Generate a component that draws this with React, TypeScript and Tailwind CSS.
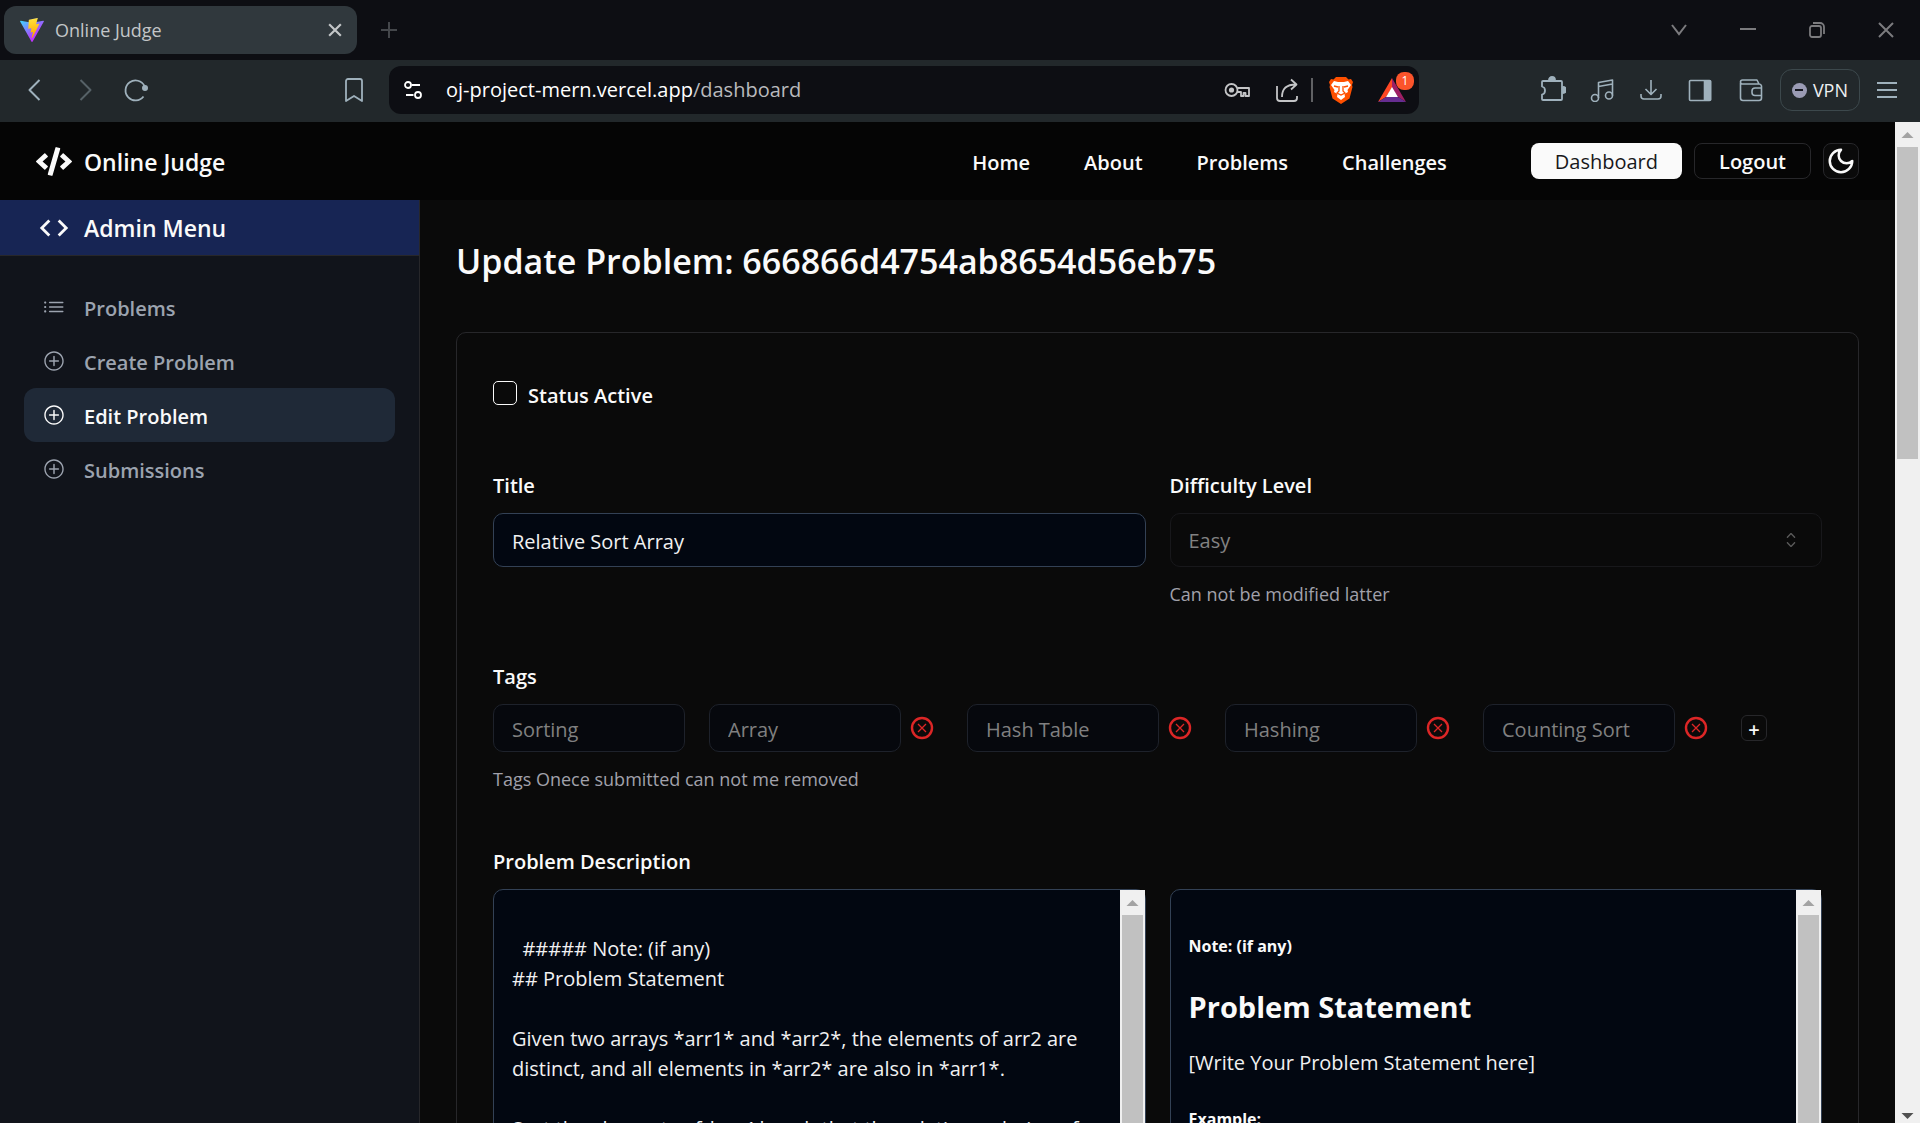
import { useState } from 'react';
import type { ReactNode } from 'react';
import { FaCode } from 'react-icons/fa';
import { MdCode } from 'react-icons/md';
import { RxCaretSort, RxListBullet, RxPlusCircled } from 'react-icons/rx';

function ViteLogo() {
  return (
    <svg viewBox="0 0 256 257" className="size-6" aria-hidden="true">
      <defs>
        <linearGradient id="vite-a" x1="-.828%" x2="57.636%" y1="7.652%" y2="78.411%">
          <stop offset="0%" stopColor="#41D1FF" />
          <stop offset="100%" stopColor="#BD34FE" />
        </linearGradient>
        <linearGradient id="vite-b" x1="43.376%" x2="50.316%" y1="2.242%" y2="89.03%">
          <stop offset="0%" stopColor="#FFEA83" />
          <stop offset="8.333%" stopColor="#FFDD35" />
          <stop offset="100%" stopColor="#FFA800" />
        </linearGradient>
      </defs>
      <path fill="url(#vite-a)" d="M255.153 37.938 134.897 252.976c-2.483 4.44-8.862 4.466-11.382.048L.875 37.958c-2.746-4.814 1.371-10.646 6.827-9.67l120.385 21.517a6.537 6.537 0 0 0 2.322-.004l117.867-21.483c5.438-.991 9.574 4.796 6.877 9.62Z" />
      <path fill="url(#vite-b)" d="M185.432.063 96.44 17.501a3.268 3.268 0 0 0-2.634 3.014l-5.474 92.456a3.268 3.268 0 0 0 3.997 3.378l24.777-5.718c2.318-.535 4.413 1.507 3.936 3.838l-7.361 36.047c-.495 2.426 1.782 4.5 4.151 3.78l15.304-4.649c2.372-.72 4.652 1.36 4.15 3.788l-11.698 56.621c-.732 3.542 3.979 5.473 5.943 2.437l1.313-2.028 72.516-144.72c1.215-2.423-.88-5.186-3.54-4.672l-25.505 4.922c-2.396.462-4.435-1.77-3.759-4.114l16.646-57.705c.677-2.35-1.37-4.583-3.769-4.113Z" />
    </svg>
  );
}

function Icon({ children, className = '' }: { children: ReactNode; className?: string }) {
  return (
    <svg viewBox="0 0 24 24" fill="none" stroke="currentColor" strokeWidth="1.6" strokeLinejoin="round" className={className} aria-hidden="true">
      {children}
    </svg>
  );
}

function IconButton({ label, children, className = '' }: { label: string; children: ReactNode; className?: string }) {
  return (
    <button type="button" aria-label={label} className={`flex shrink-0 items-center justify-center ${className}`}>
      {children}
    </button>
  );
}

function TabStrip() {
  return (
    <div className="flex h-15 shrink-0 items-center bg-[#0d0e13] text-[#7b7b7e]">
      <div className="ml-1 flex h-12 w-[353px] items-center rounded-xl bg-[#30383d] pl-4 pr-3 text-[#c3c6c8]">
        <ViteLogo />
        <span className="ml-[11px] flex-1 text-[18px]">Online Judge</span>
        <IconButton label="Close tab" className="size-5">
          <Icon className="size-5"><path strokeWidth="2.6" d="M5 5l14 14M19 5 5 19" /></Icon>
        </IconButton>
      </div>
      <IconButton label="New tab" className="ml-6 size-4 text-[#44474b]">
        <svg viewBox="0 0 16 16" className="size-4" stroke="currentColor" strokeWidth="2" aria-hidden="true"><path d="M8 0v16M0 8h16" /></svg>
      </IconButton>
      <div className="ml-auto flex items-center">
        <IconButton label="Search tabs" className="size-[69px]">
          <svg viewBox="0 0 16 16" className="size-4" fill="none" stroke="currentColor" strokeWidth="2" aria-hidden="true"><path d="m1 3 7 9 7-9" /></svg>
        </IconButton>
        <IconButton label="Minimize" className="size-[69px]">
          <svg viewBox="0 0 16 16" className="size-4" stroke="currentColor" strokeWidth="2" aria-hidden="true"><path d="M0 7h16" /></svg>
        </IconButton>
        <IconButton label="Restore" className="size-[69px]">
          <svg viewBox="0 0 16 16" className="size-4" fill="none" stroke="currentColor" strokeWidth="1.8" aria-hidden="true">
            <rect x="1" y="4" width="11" height="11" rx="2" />
            <path d="M4 1h7a4 4 0 0 1 4 4v7" />
          </svg>
        </IconButton>
        <IconButton label="Close" className="size-[69px]">
          <svg viewBox="0 0 16 16" className="size-4" stroke="currentColor" strokeWidth="2" aria-hidden="true"><path d="m1 1 14 14M15 1 1 15" /></svg>
        </IconButton>
      </div>
    </div>
  );
}

function Toolbar() {
  return (
    <div className="flex h-[62px] shrink-0 items-center bg-[#22282b] pb-[2px] text-[#9fb1bc]">
      <IconButton label="Back" className="ml-[22px] size-6">
        <Icon className="size-6"><path strokeWidth="2" d="M17.500 2 7.500 12l10 10" /></Icon>
      </IconButton>
      <IconButton label="Forward" className="ml-[27px] size-6 text-[#566167]">
        <Icon className="size-6"><path strokeWidth="2" d="m7.500 2 10 10-10 10" /></Icon>
      </IconButton>
      <IconButton label="Reload" className="ml-[27px] size-6">
        <Icon className="size-6"><path strokeWidth="1.800" d="M19.500 18.500A10 10 0 1 1 20.500 8" /><circle cx="21" cy="10" r="2.200" fill="currentColor" /></Icon>
      </IconButton>
      <IconButton label="Bookmark" className="ml-[194px] size-6">
        <Icon className="size-6"><path strokeWidth="1.800" d="M4 3a2 2 0 0 1 2-2h12a2 2 0 0 1 2 2v20l-8-5-8 5Z" /></Icon>
      </IconButton>

      <div className="ml-[23px] flex h-12 min-w-0 flex-1 items-center rounded-xl bg-[#0d0e13] text-[#c4c5c7]">
        <IconButton label="Site settings" className="ml-[14px] size-5 text-white">
          <svg viewBox="0 0 20 20" className="size-5" fill="none" stroke="currentColor" strokeWidth="1.800" aria-hidden="true">
            <circle cx="5" cy="5" r="3" /><path d="M8.500 5H17M3 15h7.500" /><circle cx="15" cy="15" r="3" />
          </svg>
        </IconButton>
        <p className="ml-[23px] flex-1 truncate text-[20px] text-[#b9babd]">
          <span className="text-white">oj-project-mern.vercel.app</span>/dashboard
        </p>
        <IconButton label="Passwords" className="size-[26px]">
          <svg viewBox="0 0 26 26" className="size-[26px]" fill="none" stroke="currentColor" strokeWidth="1.800" strokeLinejoin="round" aria-hidden="true">
            <circle cx="7.500" cy="13" r="6" /><circle cx="7.500" cy="13" r="2.600" fill="currentColor" stroke="none" />
            <path d="M13.500 11H25v8h-3.500v-3h-2v3H17v-4h-4" />
          </svg>
        </IconButton>
        <IconButton label="Share" className="ml-[25px] size-6">
          <Icon className="size-6"><path strokeWidth="1.800" d="M2 8v12a3 3 0 0 0 3 3h14a3 3 0 0 0 3-3v-2M7 19C7 11 11 6.500 21 6.500M16 1.500l5.500 5-5.500 5" /></Icon>
        </IconButton>
        <div className="ml-3 h-6 w-[2px] bg-[#606164]" />
        <IconButton label="Brave Shields" className="ml-4 h-7 w-6">
          <svg viewBox="0 0 24 28" className="h-7 w-6" aria-hidden="true">
            <path fill="#ff5000" d="M7 1h10l2.500 2.500 2.500-.5 2 3-1 3 .500 2-3 11.500L12 28l-8.500-5.500L.500 11 1 9 0 6l2-3 2.500.500Z" />
            <path fill="#fff" d="m5 5 4 1h6l4-1 3 4-3.500 5 .5 2-3.500 2 .5 3-4 3-4-3 .5-3L5 16l.500-2L2 9Z" />
            <path fill="none" stroke="#ff5000" strokeWidth="1.300" d="m5 10 4 1M19 10l-4 1M10 10v5l-2 2 4 2 4-2-2-2v-5" />
          </svg>
        </IconButton>
        <button type="button" aria-label="Brave Rewards, 1 new" className="relative ml-[25px] mr-[13px] size-7 shrink-0">
          <svg viewBox="0 0 28 28" className="size-7" aria-hidden="true">
            <path fill="#ff4724" d="M14 2 0 26l8-5 6-9Z" />
            <path fill="#9e1f63" d="M14 2v10l6 9 8 5Z" />
            <path fill="#662d91" d="m0 26 8-5h12l8 5Z" />
            <path fill="#fff" d="m14 11-6 10h12Z" />
          </svg>
          <span className="absolute -right-2 -top-1 flex h-[18px] w-[18px] items-center justify-center rounded-lg bg-[#fb542b] text-[12px] leading-none text-white">1</span>
        </button>
      </div>

      <IconButton label="Extensions" className="ml-[119px] size-7">
        <svg viewBox="0 0 28 28" className="size-7" fill="none" stroke="currentColor" strokeWidth="1.800" strokeLinejoin="round" aria-hidden="true">
          <path d="M5 5h18a1 1 0 0 1 1 1v17a1 1 0 0 1-1 1H5a1 1 0 0 1-1-1v-4.500a4 4 0 0 0 3-4 4 4 0 0 0-3-4V6a1 1 0 0 1 1-1Z" />
          <path fill="currentColor" d="M11 4a3 3 0 0 1 6 0ZM25 11a3 3 0 0 1 0 6Z" />
        </svg>
      </IconButton>
      <IconButton label="Media" className="ml-6 size-6">
        <Icon className="size-6"><circle cx="5" cy="20" r="3.500" /><circle cx="19" cy="17.500" r="3.500" /><path d="M8.500 20V4.500L22.500 2v15.500M8.500 8.500 22.500 6" /></Icon>
      </IconButton>
      <IconButton label="Downloads" className="ml-[25px] size-6">
        <Icon className="size-6"><path d="M12 2v14M6.500 11l5.500 5.500 5.500-5.500M2 16v2a3 3 0 0 0 3 3h14a3 3 0 0 0 3-3v-2" /></Icon>
      </IconButton>
      <IconButton label="Sidebar" className="ml-[25px] size-6">
        <Icon className="size-6"><rect x="1.500" y="2.500" width="21" height="20" rx="1" /><path fill="currentColor" d="M16.500 3h6v19h-6z" /></Icon>
      </IconButton>
      <IconButton label="Wallet" className="ml-[27px] size-6">
        <Icon className="size-6"><path d="M1.500 5v15a2.500 2.500 0 0 0 2.500 2.500h16a2.500 2.500 0 0 0 2.500-2.500V8A2.500 2.500 0 0 0 20 6H3.500a2 2 0 0 1 0-4H18l2 4M22.500 10H16a3 3 0 0 0-3 3v1.500a3 3 0 0 0 3 3h6.500" /></Icon>
      </IconButton>
      <button type="button" className="ml-[17px] flex h-[42px] shrink-0 items-center gap-[6px] rounded-xl border border-[#3c484c] px-[11px] text-[18px] text-[#eef0f2]">
        <span className="flex size-[15px] items-center justify-center rounded-full bg-[#9a9bb4]"><span className="h-[2px] w-2 bg-[#15171f]" /></span>
        VPN
      </button>
      <IconButton label="Menu" className="ml-[17px] mr-[23px] h-6 w-5">
        <svg viewBox="0 0 20 24" className="h-6 w-5" stroke="currentColor" strokeWidth="1.800" aria-hidden="true"><path d="M0 5h20M0 12h20M0 19h20" /></svg>
      </IconButton>
    </div>
  );
}

const navLinks = ['Home', 'About', 'Problems', 'Challenges'];

function SiteHeader() {
  return (
    <header className="flex h-[78px] shrink-0 items-center bg-[#050505] px-9 text-[#fafafa]">
      <a href="#home" className="flex items-center gap-3 text-[23px] font-semibold">
        <FaCode className="h-[29px] w-9" aria-hidden="true" />
        <span className="pt-[2px]">Online Judge</span>
      </a>
      <nav className="ml-auto flex gap-[54px] pt-1 text-[20px] font-semibold">
        {navLinks.map((link) => (
          <a key={link} href={`#${link.toLowerCase()}`}>{link}</a>
        ))}
      </nav>
      <div className="ml-[84px] flex gap-3 text-[20px]">
        <button type="button" className="h-9 rounded-lg bg-[#fafafa] px-6 pt-[2px] text-[#18181b]">Dashboard</button>
        <button type="button" className="h-9 rounded-lg border border-[#27272a] px-6 pt-[2px] font-semibold">Logout</button>
        <button type="button" aria-label="Switch theme" className="flex size-9 items-center justify-center rounded-lg border border-[#27272a] bg-[#0a0a0a]">
          <svg viewBox="0 0 24 24" className="size-[30px] shrink-0" fill="none" stroke="currentColor" strokeWidth="2" strokeLinecap="round" strokeLinejoin="round" aria-hidden="true">
            <path d="M12 3a6 6 0 0 0 9 9 9 9 0 1 1-9-9Z" />
          </svg>
        </button>
      </div>
    </header>
  );
}

const menu = [
  { label: 'Problems', icon: RxListBullet, active: false },
  { label: 'Create Problem', icon: RxPlusCircled, active: false },
  { label: 'Edit Problem', icon: RxPlusCircled, active: true },
  { label: 'Submissions', icon: RxPlusCircled, active: false },
];

function Sidebar() {
  return (
    <aside className="w-[420px] shrink-0 border-r border-[#27272a] bg-[#11141b]">
      <h2 className="flex h-14 items-center border-b border-[#27272a] bg-[#172554] pl-[37px] text-[23px] font-semibold text-[#fafafa]">
        <MdCode className="size-[34px]" aria-hidden="true" />
        <span className="ml-[13px] pt-[2px]">Admin Menu</span>
      </h2>
      <nav className="mt-6 px-6 text-[20px] font-semibold">
        {menu.map(({ label, icon: MenuIcon, active }) => (
          <a
            key={label}
            href={`#${label}`}
            aria-current={active ? 'page' : undefined}
            className={`flex h-[54px] items-center rounded-xl pl-[19px] ${active ? 'bg-[#1f2937] text-[#fafafa]' : 'text-[#9ca3af]'}`}
          >
            <MenuIcon className="size-[22px]" aria-hidden="true" />
            <span className="ml-[19px] pt-1">{label}</span>
          </a>
        ))}
      </nav>
    </aside>
  );
}

function ScrollTrack({ down = false, thumb }: { down?: boolean; thumb: string }) {
  return (
    <div className="flex w-[25px] shrink-0 flex-col bg-[#f0f0f0]" aria-hidden="true">
      <svg viewBox="0 0 25 25" className="h-[25px] w-[25px] shrink-0"><path fill="#a3a3a3" d="m12.500 10 6 6h-12Z" /></svg>
      <div className="min-h-0 flex-1 px-[2px]"><div className={`bg-[#c1c1c1] ${thumb}`} /></div>
      {down && <svg viewBox="0 0 25 17" className="h-[17px] w-[25px] shrink-0"><path fill="#505050" d="m12.500 13 6-6h-12Z" /></svg>}
    </div>
  );
}

const tags = ['Sorting', 'Array', 'Hash Table', 'Hashing', 'Counting Sort'];

const draft = `
  ##### Note: (if any)
## Problem Statement

Given two arrays *arr1* and *arr2*, the elements of arr2 are distinct, and all elements in *arr2* are also in *arr1*.

Sort the elements of *arr1* such that the relative ordering of items in *arr1* are the same as in *arr2*.`;

const fieldLabel = 'block text-[20px] leading-[30px] font-semibold text-[#fafafa]';
const hint = 'text-[18px] leading-[26px] text-[#a1a1aa]';

function ProblemForm() {
  const [active, setActive] = useState(false);
  const [title, setTitle] = useState('Relative Sort Array');
  const [description, setDescription] = useState(draft);
  return (
    <form className="mt-[46px] rounded-[10px] border border-[#27272a] px-9 pt-12">
      <div className="flex items-start gap-[11px]">
        <input
          id="status"
          type="checkbox"
          checked={active}
          onChange={(e) => setActive(e.target.checked)}
          className="size-6 appearance-none rounded-[5px] border border-[#fafafa] checked:bg-[#fafafa]"
        />
        <label htmlFor="status" className={fieldLabel}>Status Active</label>
      </div>

      <div className="mt-[60px] grid grid-cols-2 gap-6">
        <div>
          <label htmlFor="title" className={fieldLabel}>Title</label>
          <input
            id="title"
            value={title}
            onChange={(e) => setTitle(e.target.value)}
            className="mt-3 h-[54px] w-full rounded-[10px] border border-[#334155] bg-[#020711] px-[18px] pt-[2px] text-[20px] text-[#f1f1f1]"
          />
        </div>
        <div>
          <label htmlFor="level" className={fieldLabel}>Difficulty Level</label>
          <div className="mt-3 flex h-[54px] items-center rounded-[10px] border border-[#18181b] pr-[18px]">
            <select id="level" disabled className="h-full flex-1 appearance-none pl-[18px] pt-[2px] text-[20px] text-[#828282] opacity-100">
              <option>Easy</option>
            </select>
            <RxCaretSort className="size-6 text-[#5a5a5a]" aria-hidden="true" />
          </div>
          <p className={`mt-[14px] ${hint}`}>Can not be modified latter</p>
        </div>
      </div>

      <fieldset className="mt-[55px]">
        <legend className={fieldLabel}>Tags</legend>
        <div className="mt-3 flex items-center gap-6">
          {tags.map((tag, i) => (
            <div key={tag} className="flex items-center gap-[9px]">
              <input
                aria-label={`Tag ${i + 1}`}
                defaultValue={tag}
                disabled
                className="h-12 w-48 rounded-[10px] border border-[#1e222b] bg-[#06080d] px-[18px] pt-[2px] text-[20px] text-[#808080]"
              />
              {i > 0 && (
                <button type="button" aria-label={`Remove ${tag}`} className="mr-[9px] text-[#dc2626]">
                  <svg viewBox="0 0 24 24" className="size-6" fill="none" stroke="currentColor" aria-hidden="true">
                    <circle cx="12" cy="12" r="10" strokeWidth="2.400" />
                    <path strokeWidth="1.300" d="m8 8 8 8M16 8l-8 8" />
                  </svg>
                </button>
              )}
            </div>
          ))}
          <button type="button" aria-label="Add tag" className="flex size-[26px] items-center justify-center rounded-md border border-[#27272a] pt-1 text-[20px] leading-none font-semibold text-[#fafafa]">+</button>
        </div>
        <p className={`mt-[14px] ${hint}`}>Tags Onece submitted can not me removed</p>
      </fieldset>

      <div className="mt-[55px]">
        <label htmlFor="description" className={fieldLabel}>Problem Description</label>
        <div className="mt-3 grid grid-cols-2 gap-6">
          <div className="flex h-[375px] rounded-[10px] border border-[#334155] bg-[#020711]">
            <textarea
              id="description"
              value={description}
              onChange={(e) => setDescription(e.target.value)}
              className="min-w-0 flex-1 resize-none overflow-hidden px-[18px] pt-[14px] text-[20px] leading-[30px] text-[#f1f1f1] outline-none"
            />
            <ScrollTrack thumb="h-[320px]" />
          </div>
          <div className="flex h-[375px] rounded-[10px] border border-[#334155] bg-[#020711]">
            <article className="min-w-0 flex-1 overflow-hidden px-[18px] pt-[43px] text-[20px] leading-[30px] text-[#f1f1f1]">
              <h5 className="text-[16px] leading-[26px] font-bold text-[#fafafa]">Note: (if any)</h5>
              <h2 className="mt-[27px] text-[29px] leading-[42px] font-bold text-[#fafafa]">Problem Statement</h2>
              <p className="mt-5">[Write Your Problem Statement here]</p>
              <h5 className="mt-7 text-[16px] leading-[26px] font-bold text-[#fafafa]">Example:</h5>
            </article>
            <ScrollTrack thumb="h-[280px]" />
          </div>
        </div>
      </div>
    </form>
  );
}

export default function App() {
  return (
    <div className="flex h-screen flex-col overflow-hidden bg-[#0a0a0a] font-['Open_Sans',sans-serif]">
      <TabStrip />
      <Toolbar />
      <div className="flex min-h-0 flex-1">
        <div className="flex min-w-0 flex-1 flex-col overflow-hidden">
          <SiteHeader />
          <div className="flex flex-1">
            <Sidebar />
            <main className="min-w-0 flex-1 px-9 pt-9">
              <h1 className="text-[34px] leading-[50px] font-semibold text-[#fafafa]">Update Problem: 666866d4754ab8654d56eb75</h1>
              <ProblemForm />
            </main>
          </div>
        </div>
        <ScrollTrack down thumb="h-[312px]" />
      </div>
    </div>
  );
}
